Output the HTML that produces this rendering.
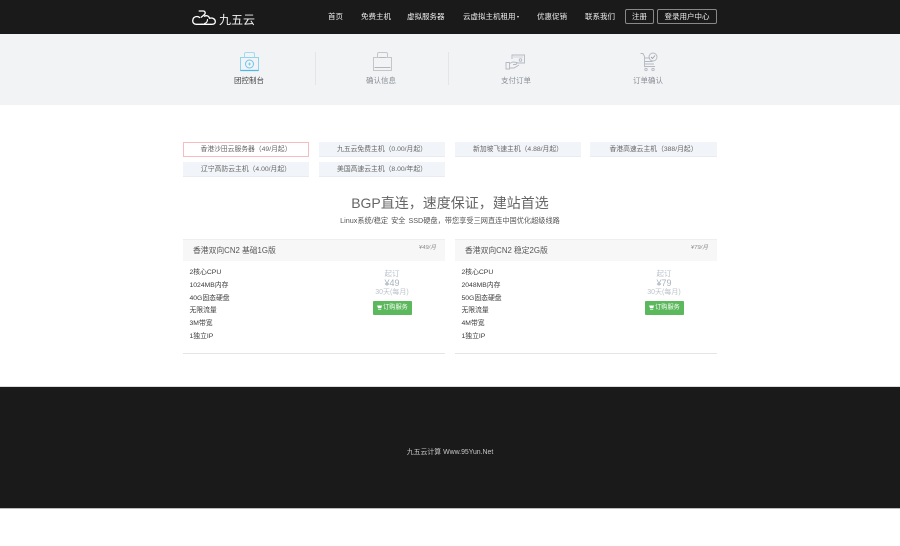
<!DOCTYPE html>
<html lang="zh-CN">
<head>
<meta charset="utf-8">
<title>九五云</title>
<style>
html,body{margin:0;padding:0;background:#fff}
body{position:relative;width:900px;height:546px;overflow:hidden;font-family:"Liberation Sans","Noto Sans CJK SC",sans-serif;color:#555}
.a{position:absolute;white-space:nowrap}
.c{text-align:center}
#hd{left:0;top:0;width:900px;height:34px;background:#1a1a1a}
#band{left:0;top:34px;width:900px;height:70.5px;background:#f1f3f5}
#ft{left:0;top:386px;width:900px;height:122.5px;background:#1a1a1a;border-top:1px solid #ddd;border-bottom:1px solid #bbb;box-sizing:border-box}
.nav{top:11px;height:11px;line-height:11px;font-size:7.5px;color:#eee}
.btn{top:9px;height:15px;line-height:14px;border:1px solid #888;border-radius:2px;box-sizing:border-box;font-size:7.5px;color:#eee;text-align:center}
.st{top:75px;height:11px;line-height:11px;font-size:7.5px;color:#8b8f96;width:60px;text-align:center}
.sep{top:52px;width:1px;height:33px;background:#e3e5e8}
.tab{height:15px;line-height:15px;width:126px;background:#f1f4f8;border-bottom:1px solid #e8ebf0;box-sizing:border-box;font-size:6.8px;color:#666;text-align:center}
.card{top:239px;width:262px;height:115px;border-top:1px solid #eee;border-bottom:1px solid #e5e5e5;box-sizing:border-box;background:#fff}
.chd{left:0;top:0;width:262px;height:21px;background:#f7f7f7}
.tt{left:10px;top:4px;line-height:13px;font-size:7.8px;color:#555}
.tg{right:9px;top:3px;line-height:10px;font-size:5.8px;font-style:italic;color:#888}
.li{left:6.5px;font-size:6.8px;line-height:10px;color:#3a3a3a}
.pr{width:60px;text-align:center;font-size:7.5px;line-height:10px;color:#bcc3cb}
.buy{width:39px;height:14px;top:61px;line-height:14px;background:#5cb85c;border-radius:1px;color:#fff;font-size:6.2px;text-align:center}
.buy svg{vertical-align:-1px;margin-right:1px}
</style>
</head>
<body>
<div class="a" id="hd"></div>
<div class="a" id="band"></div>

<svg class="a" style="left:192px;top:10px" width="26" height="16" viewBox="0 0 26 16" fill="none" stroke="#fff" stroke-width="1.3" stroke-linecap="round" stroke-linejoin="round">
<path d="M11 14.300H4.200C1.900 14.300.7 12.600.7 10.600C.7 8.200 2.500 6.500 5 6.500C6 6.500 6.900 6.900 7.600 7.500"/>
<path d="M7.200 1H11.200C13.400 1 13.800 3.500 12.200 4.800L9.200 7.200"/>
<path d="M12.500 6.200C14.700 5 17 6 17.500 8.300C20.500 7.400 23.300 9 23.300 11.500C23.300 13.300 22 14.300 20 14.300H9"/>
<path d="M15.500 9.500C15.500 11.800 14.200 13 12.500 13.500" stroke-width="1.100"/>
</svg>
<div class="a" style="left:219px;top:12px;line-height:16px;font-size:12px;color:#f2f2f2">九五云</div>

<div class="a nav" style="left:328px">首页</div>
<div class="a nav" style="left:361px">免费主机</div>
<div class="a nav" style="left:407px">虚拟服务器</div>
<div class="a nav" style="left:463px">云虚拟主机租用<span style="display:inline-block;width:0;height:0;border:1.500px solid transparent;border-top:2px solid #eee;border-bottom:0;margin-left:1px;vertical-align:middle"></span></div>
<div class="a nav" style="left:537px">优惠促销</div>
<div class="a nav" style="left:585px">联系我们</div>
<div class="a btn" style="left:625px;width:29px">注册</div>
<div class="a btn" style="left:657px;width:60px">登录用户中心</div>

<svg class="a" style="left:239px;top:52px" width="21" height="20" viewBox="0 0 21 20" fill="none" stroke="#6cc5ec" stroke-width="1">
<path d="M1.500 5.500H19.500V18.500H1.500Z" stroke="#8ed3f0"/><path d="M5.500 5.500V2C5.500 1 6 .5 7 .5H14C15 .5 15.500 1 15.500 2V5.500" stroke="#a8d8ee"/><circle cx="10.500" cy="12" r="4"/><path d="M9 12H12M10.500 10.500V13.500" stroke-width=".8"/><path d="M1.500 18.500H19.500" stroke="#4db8e8" stroke-width="1.200"/>
</svg>
<div class="a st" style="left:219px;color:#444">团控制台</div>
<div class="a sep" style="left:315px"></div>

<svg class="a" style="left:372px;top:52px" width="21" height="20" viewBox="0 0 21 20" fill="none" stroke="#c4c6cc" stroke-width="1">
<path d="M1.500 5.500H19.500V18.500H1.500Z"/><path d="M5.500 5.500V2C5.500 1 6 .5 7 .5H14C15 .5 15.500 1 15.500 2V5.500"/><path d="M7.500 5.500H13.500M2.500 15.500H18.500" stroke="#b4b7be"/>
</svg>
<div class="a st" style="left:351px">确认信息</div>
<div class="a sep" style="left:448px"></div>

<svg class="a" style="left:505px;top:54px" width="22" height="16" viewBox="0 0 22 16" fill="none" stroke="#b5b8bf" stroke-width=".9">
<path d="M7 5V1H19.500V9H12"/><path d="M8.500 3H18" stroke-dasharray="1 1"/><circle cx="15.500" cy="6" r="1.300"/><path d="M1 8.500H4.500V15H1Z"/><path d="M4.500 9.500L8 8L12 8.500L11 10.500H8M4.500 14H9L14 11"/>
</svg>
<div class="a st" style="left:486px">支付订单</div>

<svg class="a" style="left:640px;top:52px" width="19" height="20" viewBox="0 0 19 20" fill="none" stroke="#b5b8bf" stroke-width=".9">
<path d="M.5 1.500H3L4.500 4.500V14.500H15"/><path d="M4.500 6H10M4.500 9.500H12.500M4.500 12H14"/><circle cx="13" cy="5" r="4"/><path d="M11 5L12.500 6.500L15 3.500" stroke="#9a9da5"/><circle cx="6" cy="17.500" r="1.200"/><circle cx="13" cy="17.500" r="1.200"/>
</svg>
<div class="a st" style="left:618px">订单确认</div>

<div class="a tab" style="left:183px;top:142px;background:#fff;border:1px solid #f6bcbf;line-height:14px">香港沙田云服务器（49/月起）</div>
<div class="a tab" style="left:319px;top:142px;line-height:16px">九五云免费主机（0.00/月起）</div>
<div class="a tab" style="left:455px;top:142px;line-height:16px">新加坡飞速主机（4.88/月起）</div>
<div class="a tab" style="left:590px;top:142px;width:127px;line-height:16px">香港高速云主机（388/月起）</div>
<div class="a tab" style="left:183px;top:162px">辽宁高防云主机（4.00/月起）</div>
<div class="a tab" style="left:319px;top:162px">美国高速云主机（8.00/年起）</div>

<div class="a c" style="left:183px;top:193px;width:534px;line-height:20px;font-size:14px;color:#666">BGP直连，速度保证，建站首选</div>
<div class="a c" style="left:183px;top:215px;width:534px;line-height:12px;font-size:7.2px;color:#555;word-spacing:1px">Linux系统/稳定 安全 SSD硬盘，带您享受三网直连中国优化超级线路</div>

<div class="a card" style="left:183px">
<div class="a chd"></div>
<div class="a tt" style="top:4px">香港双向CN2 基础1G版</div>
<div class="a tg">¥49/月</div>
<div class="a li" style="top:28px">2核心CPU</div>
<div class="a li" style="top:41px">1024MB内存</div>
<div class="a li" style="top:54px">40G固态硬盘</div>
<div class="a li" style="top:66px">无限流量</div>
<div class="a li" style="top:79px">3M带宽</div>
<div class="a li" style="top:92px">1独立IP</div>
<div class="a pr" style="left:179px;top:29px">起订</div>
<div class="a pr" style="left:179px;top:38px;font-size:9px;color:#aab2bb">¥49</div>
<div class="a pr" style="left:179px;top:48px;font-size:7px">30天(每月)</div>
<div class="a buy" style="left:190px"><svg width="5" height="5" viewBox="0 0 5 5"><path d="M0 .5H5L4.300 3H1Z M1 3.800H4.300V4.600H1Z" fill="#fff"/></svg>订购服务</div>
</div>

<div class="a card" style="left:455px">
<div class="a chd"></div>
<div class="a tt" style="left:10px;top:4px">香港双向CN2 稳定2G版</div>
<div class="a tg">¥79/月</div>
<div class="a li" style="top:28px">2核心CPU</div>
<div class="a li" style="top:41px">2048MB内存</div>
<div class="a li" style="top:54px">50G固态硬盘</div>
<div class="a li" style="top:66px">无限流量</div>
<div class="a li" style="top:79px">4M带宽</div>
<div class="a li" style="top:92px">1独立IP</div>
<div class="a pr" style="left:179px;top:29px">起订</div>
<div class="a pr" style="left:179px;top:38px;font-size:9px;color:#aab2bb">¥79</div>
<div class="a pr" style="left:179px;top:48px;font-size:7px">30天(每月)</div>
<div class="a buy" style="left:190px"><svg width="5" height="5" viewBox="0 0 5 5"><path d="M0 .5H5L4.300 3H1Z M1 3.800H4.300V4.600H1Z" fill="#fff"/></svg>订购服务</div>
</div>

<div class="a" id="ft"></div>
<div class="a c" style="left:0;top:447px;width:900px;line-height:12px;font-size:6.9px;color:#c8c8c8">九五云计算 Www.95Yun.Net</div>
</body>
</html>
